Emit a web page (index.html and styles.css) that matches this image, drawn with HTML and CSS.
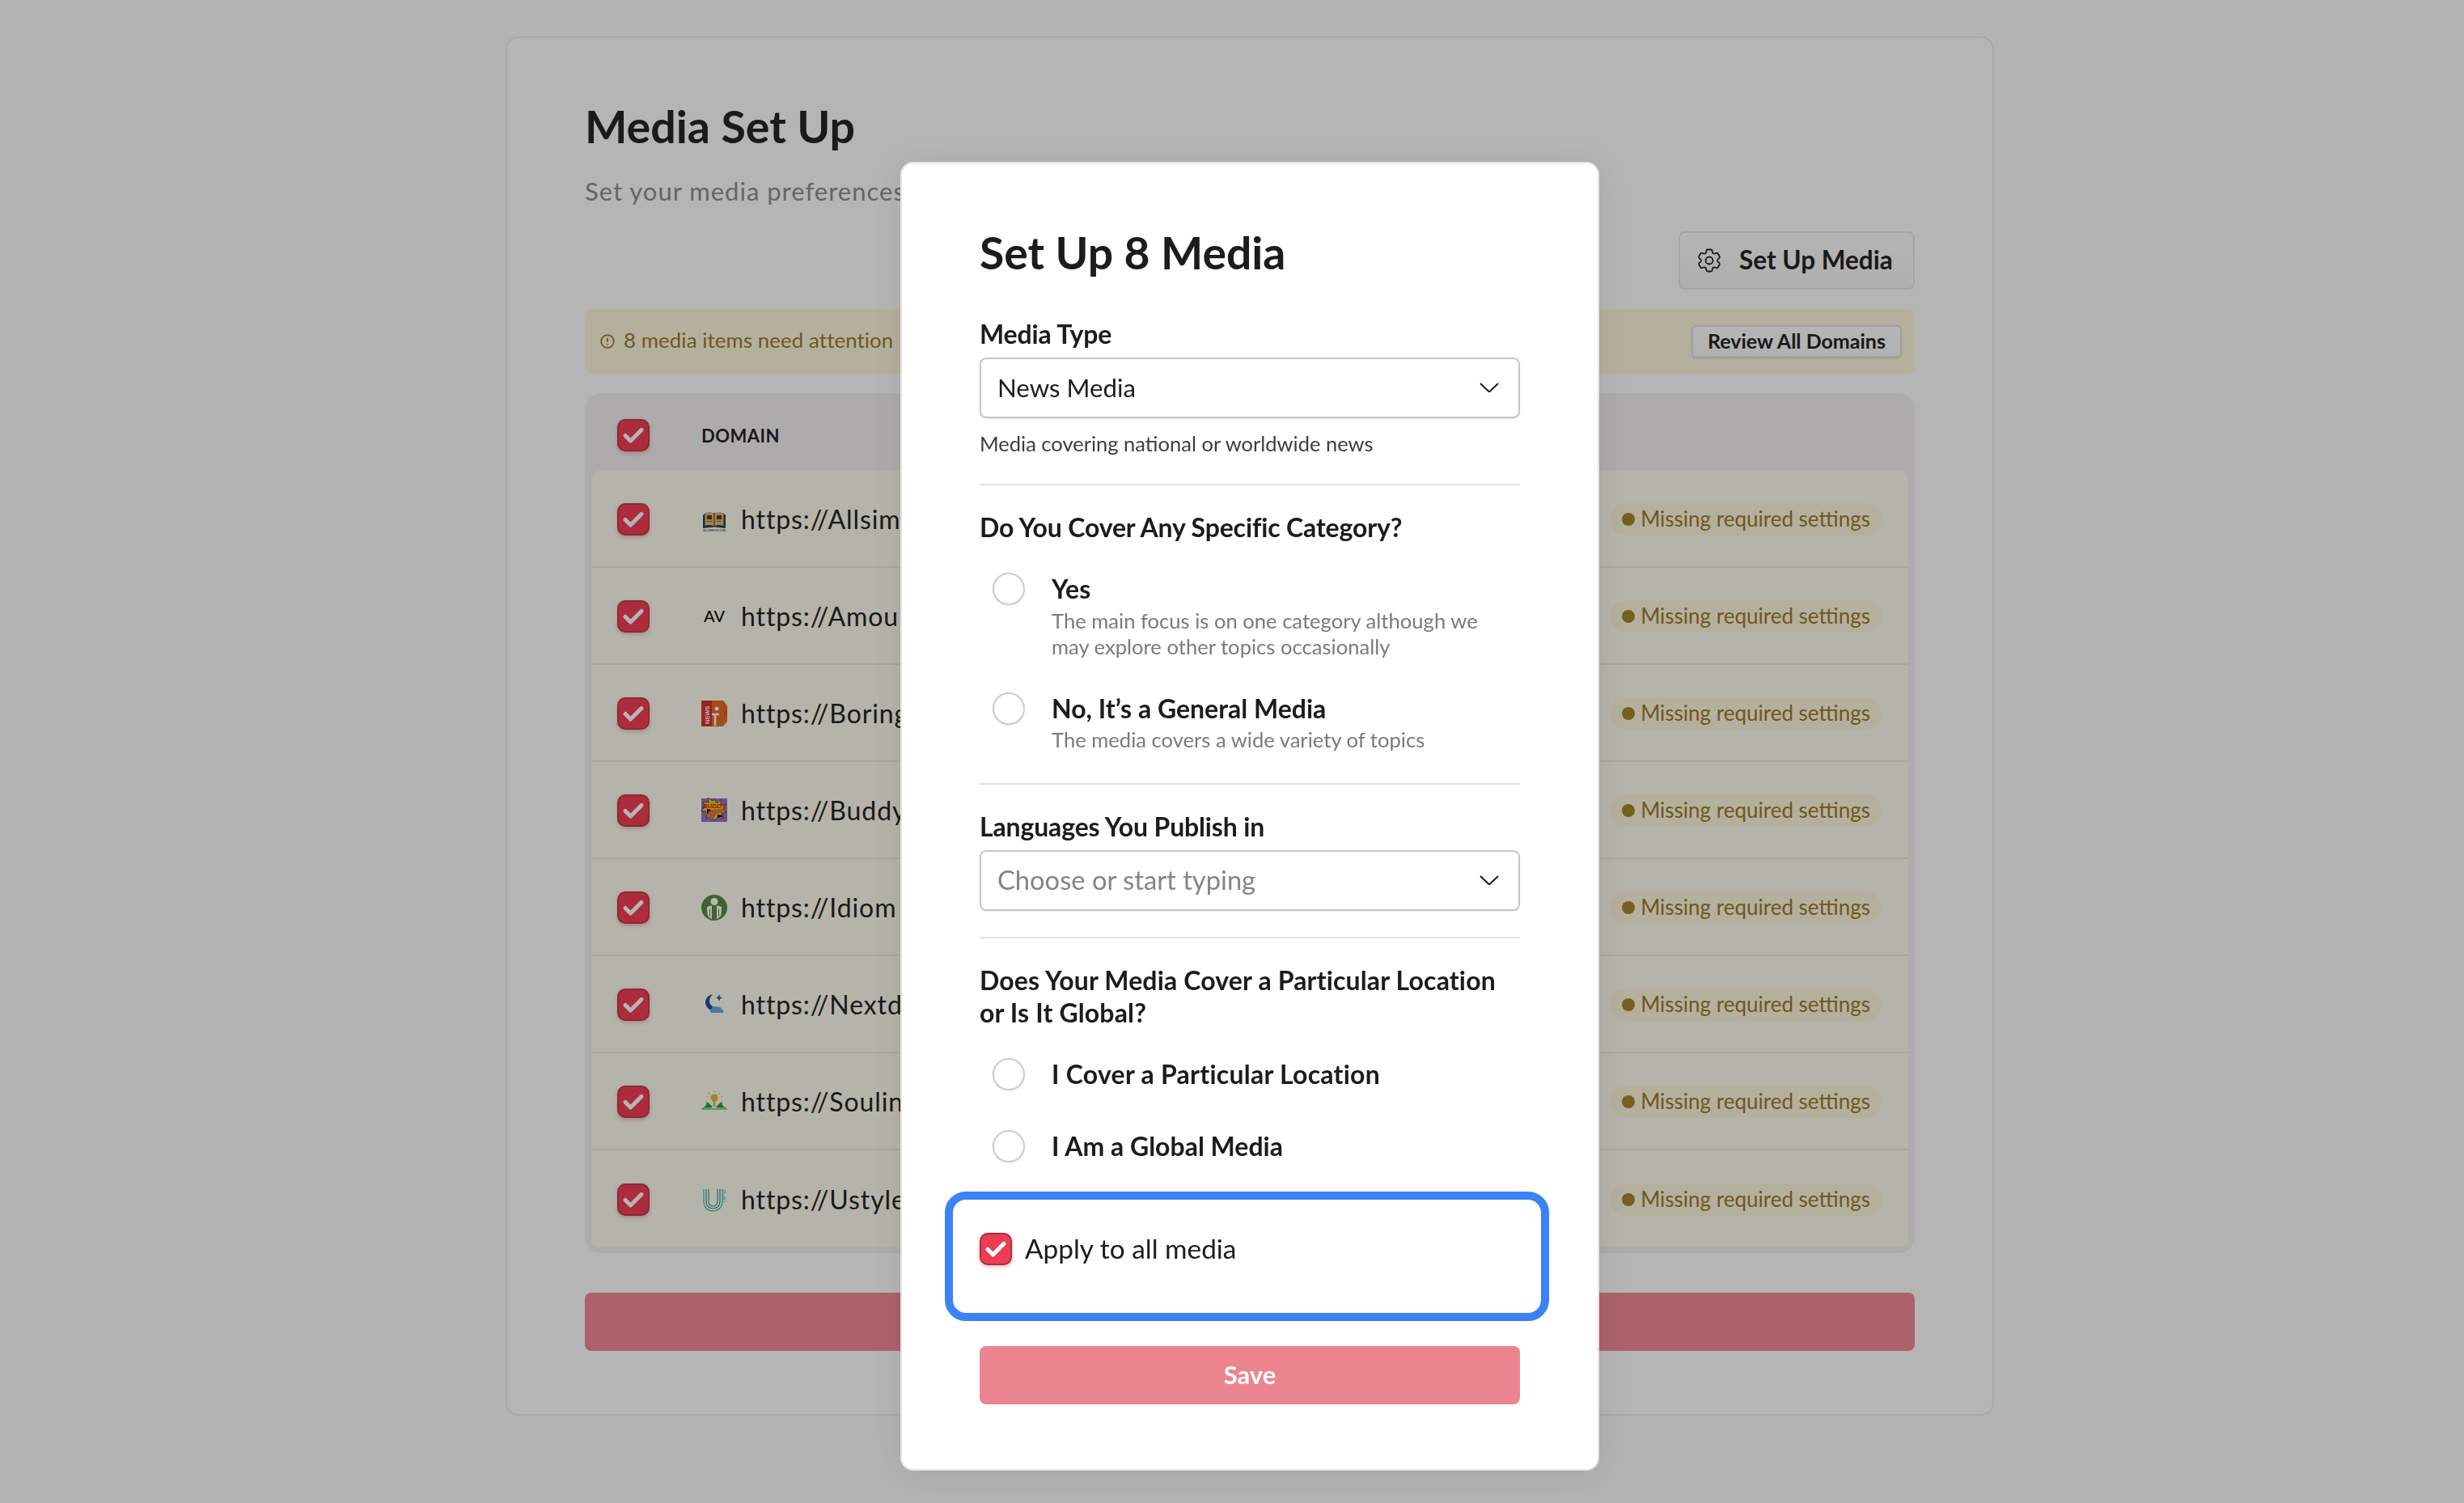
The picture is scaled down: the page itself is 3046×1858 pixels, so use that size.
FILE: index.html
```html
<!doctype html>
<html lang="en">
<head>
<meta charset="utf-8">
<title>Media Set Up</title>
<link rel="stylesheet" href="styles.css">
</head>
<body>
<svg class="defs" width="0" height="0" aria-hidden="true">
  <symbol id="check" viewBox="0 0 40 40"><path d="M10 20.5l6.5 6.5L30 13.5" fill="none" stroke="#fff" stroke-width="5" stroke-linecap="round" stroke-linejoin="round"/></symbol>
  <symbol id="chev" viewBox="0 0 24 12"><path d="M1 1l11 10.500L23 1" fill="none" stroke="#1c1c1c" stroke-width="2"/></symbol>
</svg>
<main class="card">
  <h1 class="title">Media Set Up</h1>
  <p class="subtitle">Set your media preferences</p>
  <div class="actions">
    <button class="btn-setup">
      <svg class="gear" viewBox="0 0 24 24" fill="none" stroke="#252525" stroke-width="1.200"><path d="M9.594 3.94c.09-.542.56-.94 1.11-.94h2.593c.55 0 1.02.398 1.11.94l.213 1.281c.063.374.313.686.645.87.074.04.147.083.22.127.325.196.72.257 1.075.124l1.217-.456a1.125 1.125 0 0 1 1.37.49l1.296 2.247a1.125 1.125 0 0 1-.26 1.431l-1.003.827c-.293.241-.438.613-.43.992a7.723 7.723 0 0 1 0 .255c-.008.378.137.75.43.991l1.004.827c.424.35.534.955.26 1.43l-1.298 2.247a1.125 1.125 0 0 1-1.369.491l-1.217-.456c-.355-.133-.75-.072-1.076.124a6.47 6.47 0 0 1-.22.128c-.331.183-.581.495-.644.869l-.213 1.281c-.09.543-.56.94-1.11.94h-2.594c-.55 0-1.019-.398-1.11-.94l-.213-1.281c-.062-.374-.312-.686-.644-.87a6.52 6.52 0 0 1-.22-.127c-.325-.196-.72-.257-1.076-.124l-1.217.456a1.125 1.125 0 0 1-1.369-.49l-1.297-2.247a1.125 1.125 0 0 1 .26-1.431l1.004-.827c.292-.24.437-.613.43-.991a6.932 6.932 0 0 1 0-.255c.007-.38-.138-.751-.43-.992l-1.004-.827a1.125 1.125 0 0 1-.26-1.43l1.297-2.247a1.125 1.125 0 0 1 1.37-.491l1.216.456c.356.133.751.072 1.076-.124.072-.044.146-.086.22-.128.332-.183.582-.495.644-.869l.214-1.28Z"/><circle cx="12" cy="12" r="3"/></svg>
      <span>Set Up Media</span>
    </button>
  </div>
  <div class="alert">
    <span class="alert-msg">
      <svg class="alert-icon" viewBox="0 0 18 18" fill="none" stroke="#9c7b2e" stroke-width="1.800"><circle cx="9" cy="9" r="7.800"/><path d="M9 4.800v5M9 12v1.600"/></svg>
      <span>8 media items need attention</span>
    </span>
    <button class="btn-review">Review All Domains</button>
  </div>
  <section class="table">
    <div class="thead">
      <span class="cb"><svg class="cb-check"><use href="#check"/></svg></span>
      <span class="th">DOMAIN</span>
    </div>
    <div class="row">
      <span class="cb"><svg class="cb-check"><use href="#check"/></svg></span>
      <svg class="fav" viewBox="0 0 32 32"><path d="M2 11l3-3h22l3 3v16l-14-1.500L2 27z" fill="#24465a"/><path d="M4.500 8.500C8 6.500 12 6.500 15.500 8.500V24C12 22.500 8 22.500 4.500 24z" fill="#e6b267"/><path d="M27.500 8.500C24 6.500 20 6.500 16.500 8.500V24C20 22.500 24 22.500 27.500 24z" fill="#e6b267"/><path d="M7 11h6v5H7zM19 11h6v5h-6z" fill="#5c3c1c"/><path d="M7 18.500h6M19 18.500h6" stroke="#8a6232" stroke-width="1.200"/><text class="fav-tiny" x="16" y="31" text-anchor="middle">ALLSIMILES.COM</text></svg>
      <span class="url">https://Allsim</span>
      <span class="pill"><i class="dot"></i>Missing required settings</span>
    </div>
    <div class="row">
      <span class="cb"><svg class="cb-check"><use href="#check"/></svg></span>
      <svg class="fav" viewBox="0 0 32 32"><text class="fav-av" x="16" y="23" text-anchor="middle">AV</text></svg>
      <span class="url">https://Amou</span>
      <span class="pill"><i class="dot"></i>Missing required settings</span>
    </div>
    <div class="row">
      <span class="cb"><svg class="cb-check"><use href="#check"/></svg></span>
      <svg class="fav" viewBox="0 0 32 32"><rect width="32" height="32" fill="#e5532a"/><rect width="13" height="32" fill="#dd2f2a"/><path d="M13 0h12c6 0 7 4 6.500 7.500-.4 3-2 5-3.500 7.500 2.500 2 4 5 4 9 0 5-3 8-7 8H13z" fill="#ea6a25"/><path d="M27 0h5v7zM32 26v6h-6z" fill="#f4f1e8"/><text class="fav-news" transform="translate(10 29) rotate(-90)">NEWS</text><path d="M13 17h9M17 17v14" stroke="#fff" stroke-width="2.500"/><circle cx="19" cy="10" r="2.500" fill="#fff"/></svg>
      <span class="url">https://Boring</span>
      <span class="pill"><i class="dot"></i>Missing required settings</span>
    </div>
    <div class="row">
      <span class="cb"><svg class="cb-check"><use href="#check"/></svg></span>
      <svg class="fav" viewBox="0 0 32 32"><rect width="32" height="29" y="1" fill="#9a6fd0"/><path d="M16 2l3 5 5-5 0 7 7-1-4 6 4 4-6 1 2 7-7-2-4 5-3-6-7 2 1-7-7-2 5-5-3-6 7 1-1-6 6 4z" fill="#f2c11e" stroke="#1a1a1a" stroke-width=".6"/><text class="fav-buddy" x="16" y="13" text-anchor="middle">BUDDY</text><path d="M5 19l7-4 14-1 3 2-11 5-4 5-5-2z" fill="#d97a3a"/><path d="M7 14l5 1-5 5z" fill="#1d1d3a"/><path d="M20 21l6 1v2h-6z" fill="#1a1a1a"/></svg>
      <span class="url">https://Buddy</span>
      <span class="pill"><i class="dot"></i>Missing required settings</span>
    </div>
    <div class="row">
      <span class="cb"><svg class="cb-check"><use href="#check"/></svg></span>
      <svg class="fav" viewBox="0 0 32 32"><circle cx="16" cy="16" r="16" fill="#5b8c43"/><circle cx="16" cy="8.500" r="4.500" fill="#fff"/><path d="M7 15c2-1 4-1.500 6-1.500V30c-3-1-5-3-5.500-6-.5-3-.7-6-.5-9zM25 15c-2-1-4-1.500-6-1.500V30c3-1 5-3 5.500-6 .5-3 .7-6 .5-9z" fill="#fff"/><path d="M10 18h1v9h-1zM21 18h1v9h-1z" fill="#5b8c43"/></svg>
      <span class="url">https://Idiom</span>
      <span class="pill"><i class="dot"></i>Missing required settings</span>
    </div>
    <div class="row">
      <span class="cb"><svg class="cb-check"><use href="#check"/></svg></span>
      <svg class="fav" viewBox="0 0 32 32"><path d="M14 3c-5 1-9 5-9 10 0 6 5 10 10 10 3 0 5-1 7-3-6 1-12-3-12-9 0-3 2-6 4-8z" fill="#1f4fa0"/><path d="M22 3l1.200 3.300L26 7.500l-2.800 1.200L22 12l-1.200-3.300L18 7.500l2.800-1.200z" fill="#2a63b8"/><path d="M13 26c-2.500 0-3-4-.5-5 .5-3 5-4 7-2 2-1 5 0 5.500 2.500 3 0 4 4.500 .5 4.500z" fill="#6aa9e0"/></svg>
      <span class="url">https://Nextd</span>
      <span class="pill"><i class="dot"></i>Missing required settings</span>
    </div>
    <div class="row">
      <span class="cb"><svg class="cb-check"><use href="#check"/></svg></span>
      <svg class="fav" viewBox="0 0 32 32"><circle cx="16" cy="11" r="4.500" fill="#e8b93a"/><path d="M14.500 15h3v7h-3z" fill="#e8b93a"/><path d="M16 2v2M9 5l1.500 2M23 5l-1.500 2M6 10h2M24 10h2" stroke="#e8b93a" stroke-width="1.200"/><path d="M1 24c5-1 9 0 13-1-2-3-5-6-8-7 1 3 0 5-2 6zM31 24c-5-1-9 0-13-1 2-3 5-6 8-7-1 3 0 5 2 6z" fill="#22a048"/><path d="M0 25h32" stroke="#22a048" stroke-width="1"/></svg>
      <span class="url">https://Soulin</span>
      <span class="pill"><i class="dot"></i>Missing required settings</span>
    </div>
    <div class="row">
      <span class="cb"><svg class="cb-check"><use href="#check"/></svg></span>
      <svg class="fav" viewBox="0 0 32 32" fill="none"><path d="M3 3v15c0 16 23 16 23 0V3" stroke="#3fb6bb" stroke-width="1.200"/><path d="M6 3v15c0 12 17 12 17 0V3" stroke="#2fa58f" stroke-width="1.200"/><path d="M9 3v15c0 8 11 8 11 0V3" stroke="#2fa58f" stroke-width="1.200"/><text class="fav-ustyle" transform="translate(30 19) rotate(-90)">USTYLE</text></svg>
      <span class="url">https://Ustyle</span>
      <span class="pill"><i class="dot"></i>Missing required settings</span>
    </div>
  </section>
  <div class="continue-bar"></div>
</main>

<div class="overlay"></div>

<aside class="modal">
  <h2 class="modal-title">Set Up 8 Media</h2>
  <label class="label first">Media Type</label>
  <div class="select"><span>News Media</span><svg class="chev"><use href="#chev"/></svg></div>
  <p class="help">Media covering national or worldwide news</p>
  <hr class="rule">
  <h3 class="label q">Do You Cover Any Specific Category?</h3>
  <div class="opt opt-yes">
    <i class="radio"></i>
    <div class="opt-body">
      <div class="opt-name">Yes</div>
      <div class="opt-desc">The main focus is on one category although we may explore other topics occasionally</div>
    </div>
  </div>
  <div class="opt opt-no">
    <i class="radio"></i>
    <div class="opt-body">
      <div class="opt-name">No, It’s a General Media</div>
      <div class="opt-desc">The media covers a wide variety of topics</div>
    </div>
  </div>
  <hr class="rule">
  <label class="label q">Languages You Publish in</label>
  <div class="select placeholder"><span>Choose or start typing</span><svg class="chev"><use href="#chev"/></svg></div>
  <hr class="rule rule-tight">
  <h3 class="label q q-wide">Does Your Media Cover a Particular Location<br>or Is It Global?</h3>
  <div class="opt opt-loc"><i class="radio"></i><div class="opt-body"><div class="opt-name">I Cover a Particular Location</div></div></div>
  <div class="opt opt-glob"><i class="radio"></i><div class="opt-body"><div class="opt-name">I Am a Global Media</div></div></div>
  <div class="apply-box">
    <span class="cb"><svg class="cb-check"><use href="#check"/></svg></span>
    <span class="apply-label">Apply to all media</span>
  </div>
  <button class="save">Save</button>
</aside>
</body>
</html>
```
FILE: styles.css
```css
* { box-sizing: border-box; }
html, body { margin: 0; padding: 0; }
body {
  width: 3046px;
  height: 1858px;
  overflow: hidden;
  background: #fcfcfc;
  font-family: "Lato", "Noto Sans", sans-serif;
  color: #252525;
  padding: 45px 0 0 625px;
}
.defs { position: absolute; }
button { font-family: inherit; cursor: pointer; }

.card {
  width: 1840px;
  height: 1705px;
  background: #fff;
  border: 2px solid #f0ecec;
  border-radius: 16px;
  padding: 75px 96px 0;
}
.title { margin: 0; font-size: 55.500px; line-height: 68px; font-weight: 700; }
.subtitle { margin: 26px 0 0; font-size: 31px; line-height: 40px; letter-spacing: 1px; color: #8f8f8f; white-space: nowrap; }
.actions { display: flex; justify-content: flex-end; margin-top: 30px; }
.btn-setup {
  display: flex; align-items: center; gap: 19px;
  height: 72px; width: 292px; padding: 0 0 0 18px;
  background: linear-gradient(#fff, #f6f6f6);
  border: 2px solid #ebe7e9; border-radius: 8px;
  color: #252525; font-size: 31.500px; font-weight: 700;
}
.btn-setup span { padding-bottom: 2px; }
.gear { width: 36px; height: 36px; flex: none; }

.alert {
  display: flex; align-items: center; justify-content: space-between;
  height: 80px; margin-top: 24px; padding: 0 16px 0 19px;
  background: #fff8de; border-radius: 10px;
}
.alert-msg { display: flex; align-items: center; gap: 11px; font-size: 25.800px; color: #9c7b2e; padding-bottom: 4px; letter-spacing: .1px; }
.alert-icon { width: 18px; height: 18px; margin-top: 4px; }
.btn-review {
  width: 260px; height: 40px; padding: 0 0 2px;
  background: linear-gradient(#fff, #fafafa);
  border: 2px solid #e4e2e4; border-radius: 6px;
  box-shadow: 0 1px 2px rgba(0,0,0,.12);
  color: #252525; font-size: 25px; font-weight: 700;
}

.table {
  margin-top: 24px; padding: 0 8px 7px;
  background: #f4f1f3; border-radius: 20px;
}
.thead { display: flex; align-items: center; height: 96px; padding: 8px 0 0 32px; gap: 64px; }
.th { font-size: 22px; font-weight: 700; letter-spacing: .5px; color: #252525; }
.row {
  display: flex; align-items: center;
  height: 120px; padding: 2px 33px 0 32px;
  background: #fffef0; border-bottom: 2px solid #edebe3;
}
.row:nth-child(2) { border-radius: 10px 10px 0 0; }
.row:last-child { border-bottom: 0; border-radius: 0 0 10px 10px; }

.cb {
  position: relative; flex: none; display: block;
  width: 40px; height: 40px;
  background: #f43f55; border: 2px solid #c43a4c; border-radius: 10px;
  box-shadow: 0 2px 5px rgba(200,50,70,.35);
}
.cb-check { position: absolute; left: -2px; top: -2px; width: 40px; height: 40px; }

.fav { width: 32px; height: 32px; margin-left: 64px; flex: none; }
.fav-av { font: 500 20px "Lato", sans-serif; fill: #111; }
.fav-news { font: 700 7.500px "Liberation Sans", sans-serif; fill: #fff; }
.fav-tiny { font: 700 3.200px "Liberation Sans", sans-serif; fill: #4a6070; }
.fav-buddy { font: italic 700 8px "Liberation Sans", sans-serif; fill: #d9201c; }
.fav-ustyle { font: 400 4px "Liberation Sans", sans-serif; fill: #2fa58f; }
.url { margin-left: 17px; padding-bottom: 2px; font-size: 32px; letter-spacing: .9px; color: #252525; white-space: nowrap; }
.pill {
  display: flex; align-items: center; gap: 7px;
  height: 40px; margin-left: auto; padding: 0 14px 3px 15px;
  background: #fff8de; border-radius: 20px;
  color: #9c7b2e; font-size: 26px; white-space: nowrap;
}
.dot { width: 16px; height: 16px; border-radius: 50%; background: #a8862f; margin-top: 3px; }
.continue-bar { height: 72px; margin-top: 49px; background: #f38a98; border-radius: 8px; }

.overlay { position: fixed; inset: 0; background: rgba(0,0,0,.29); }

.modal {
  position: absolute; left: 1113px; top: 200px;
  width: 864px; height: 1618px;
  background: #fff; border: 2px solid #e6e4e4; border-radius: 16px;
  padding: 76px 96px 0;
  box-shadow: 0 4px 40px rgba(0,0,0,.08);
  color: #1c1c1c;
}
.modal-title { margin: 0; font-size: 55.300px; line-height: 68px; font-weight: 700; }
.label { display: block; margin: 0 0 -2px; padding-top: 2px; font-size: 32px; line-height: 40px; font-weight: 700; letter-spacing: -.15px; }
.label.first { margin-top: 45px; }
.label.q { margin-top: 30px; }
.label.q-wide { letter-spacing: .15px; }
.select {
  display: flex; align-items: center; justify-content: space-between;
  height: 75px; margin-top: 11px; padding: 0 24px 2px 20px;
  border: 2px solid #c9c5c6; border-radius: 8px;
  box-shadow: 0 1px 2px rgba(0,0,0,.08);
  font-size: 31.200px;
}
.select.placeholder { color: #888384; font-size: 32.700px; }
.chev { width: 24px; height: 12px; }
.help { margin: 15px 0 0; font-size: 25.500px; line-height: 32px; color: #3e3b3c; }
.rule { height: 2px; margin: 34px 0 0; border: 0; background: #e4e2e3; }
.opt { display: flex; padding-left: 16px; gap: 33px; }
.radio { flex: none; width: 40px; height: 40px; margin-top: 2px; background: #fff; border: 2px solid #cfcbcc; border-radius: 50%; box-shadow: 0 1px 2px rgba(0,0,0,.08); }
.opt-body { min-width: 0; }
.opt-name { margin-bottom: -2px; padding-top: 2px; font-size: 32px; line-height: 40px; font-weight: 700; }
.opt-desc { margin-top: 4px; font-size: 25.600px; line-height: 32px; color: #7d797a; width: 545px; }
.opt-yes { margin-top: 36px; }
.opt-yes .opt-desc { margin-top: 5px; }
.opt-no { margin-top: 39px; }
.opt-no + .rule { margin-top: 38px; }
.rule-tight { margin-top: 32px; }
.opt-loc { margin-top: 36px; }
.opt-loc .opt-name { letter-spacing: .25px; }
.opt-glob { margin-top: 47px; }

.apply-box {
  display: flex; align-items: center; gap: 16px;
  height: 160px; margin: 36px -36px 0 -43px; padding: 0 0 18px 33px;
  border: 10px solid #3b82f6; border-radius: 26px;
}
.apply-box .cb { background: #ef3c53; border-color: #a8303f; }
.apply-label { font-size: 33.400px; padding-bottom: 2px; }
.save {
  display: block; width: 100%; height: 72px; margin-top: 31px; padding: 0 0 2px;
  background: #ec848f; border: 0; border-radius: 8px;
  color: #fff; font-size: 31px; font-weight: 700;
}
```
